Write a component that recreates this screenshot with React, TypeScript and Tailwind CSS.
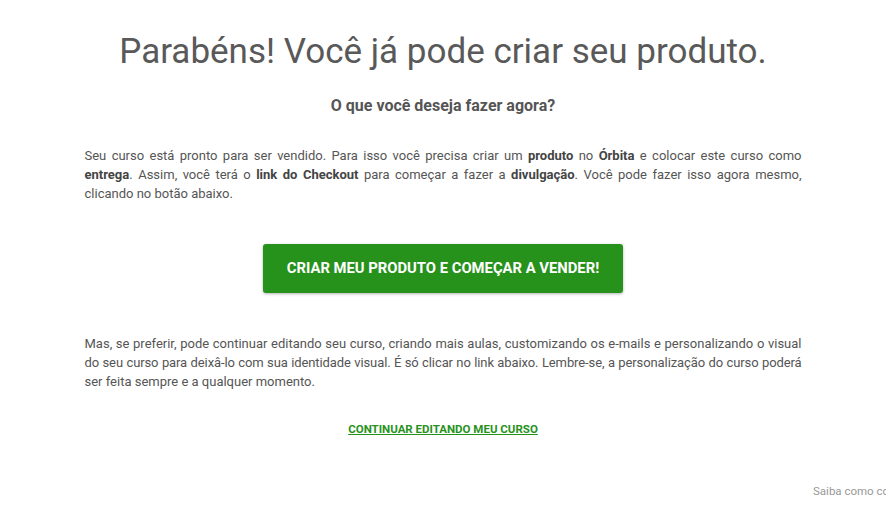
import React from "react";

const L = "block whitespace-nowrap text-justify [text-align-last:justify]";
const B = "font-bold text-[#444]";

export default function App() {
  return (
    <div
      className="relative w-[886px] h-[511px] overflow-hidden bg-white text-[#555]"
      style={{ fontFamily: "Roboto, 'Liberation Sans', sans-serif" }}
    >
      <div className="mx-auto w-[717px] pt-[32px] flex flex-col items-center">
        <h1 className="text-[35px] leading-[40px] font-normal text-[#595959] text-center">
          Parabéns! Você já pode criar seu produto.
        </h1>
        <h2 className="mt-[24px] text-[16px] leading-[20px] font-bold text-[#555] text-center">
          O que você deseja fazer agora?
        </h2>
        <p className="mt-[30px] w-full text-[13px] leading-[19px] text-[#555]">
          <span className={L}>
            Seu curso está pronto para ser vendido. Para isso você precisa criar um{" "}
            <b className={B}>produto</b> no <b className={B}>Órbita</b> e colocar este curso como
          </span>
          <span className={L}>
            <b className={B}>entrega</b>. Assim, você terá o <b className={B}>link do Checkout</b>{" "}
            para começar a fazer a <b className={B}>divulgação</b>. Você pode fazer isso agora
            mesmo,
          </span>
          <span className="block">clicando no botão abaixo.</span>
        </p>
        <button className="mt-[41px] w-[360px] h-[49px] rounded-[3px] bg-[#26921c] text-white text-[14.8px] font-bold uppercase shadow-[0_1px_3px_rgba(0,0,0,0.3)]">
          CRIAR MEU PRODUTO E COMEÇAR A VENDER!
        </button>
        <p className="mt-[41px] w-full text-[13px] leading-[19px] text-[#555]">
          <span className={L}>
            Mas, se preferir, pode continuar editando seu curso, criando mais aulas, customizando os
            e-mails e personalizando o visual
          </span>
          <span className={`${L} tracking-[-0.1px]`}>
            do seu curso para deixâ-lo com sua identidade visual. É só clicar no link abaixo.
            Lembre-se, a personalização do curso poderá
          </span>
          <span className="block">ser feita sempre e a qualquer momento.</span>
        </p>
        <a
          href="#"
          className="mt-[31px] text-[11.5px] leading-[14px] font-bold uppercase text-[#26921c] underline"
        >
          CONTINUAR EDITANDO MEU CURSO
        </a>
      </div>
      <div className="absolute left-[813px] top-[483px] whitespace-nowrap text-[11.5px] leading-[16px] text-[#999]">
        Saiba como configurar
      </div>
    </div>
  );
}
